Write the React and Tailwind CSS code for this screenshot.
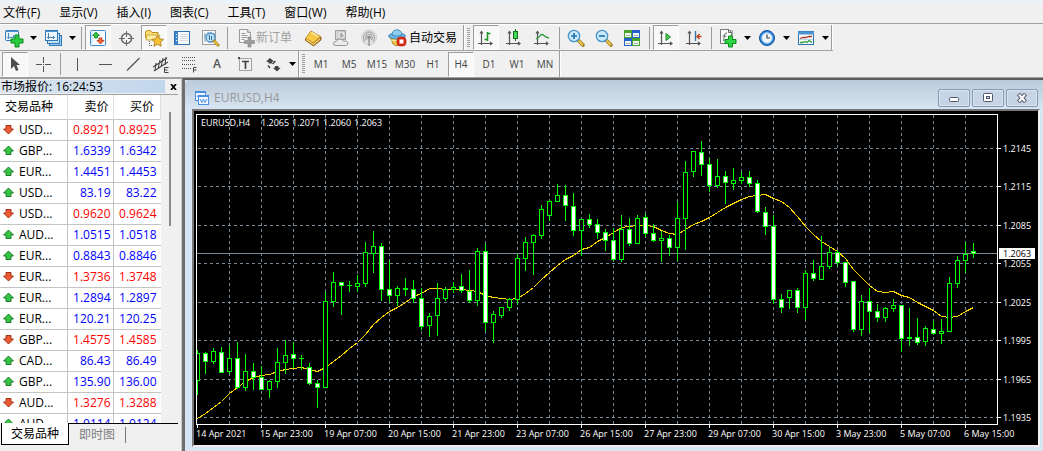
import clsx from "clsx";

// ---------- data ----------

const menus = ["文件(F)", "显示(V)", "插入(I)", "图表(C)", "工具(T)", "窗口(W)", "帮助(H)"];

const quotes = [
  ["USD...", "0.8921", "0.8925", "down"],
  ["GBP...", "1.6339", "1.6342", "up"],
  ["EUR...", "1.4451", "1.4453", "up"],
  ["USD...", "83.19", "83.22", "up"],
  ["USD...", "0.9620", "0.9624", "down"],
  ["AUD...", "1.0515", "1.0518", "up"],
  ["EUR...", "0.8843", "0.8846", "up"],
  ["EUR...", "1.3736", "1.3748", "down"],
  ["EUR...", "1.2894", "1.2897", "up"],
  ["EUR...", "120.21", "120.25", "up"],
  ["GBP...", "1.4575", "1.4585", "down"],
  ["CAD...", "86.43", "86.49", "up"],
  ["GBP...", "135.90", "136.00", "up"],
  ["AUD...", "1.3276", "1.3288", "down"],
  ["AUD...", "1.0114", "1.0124", "up"],
];

const timeframes = ["M1", "M5", "M15", "M30", "H1", "H4", "D1", "W1", "MN"];

// high, body top, body bottom, low, 1 = bearish
const candles = [
  [350, 353, 380, 394, 0], [352, 353, 361, 373, 1], [348, 351, 361, 363, 0], [347, 352, 372, 372, 1],
  [346, 358, 371, 373, 0], [342, 358, 387, 388, 1], [354, 371, 387, 390, 0], [363, 371, 377, 389, 1],
  [366, 377, 389, 389, 1], [380, 381, 389, 397, 0], [348, 362, 381, 387, 0], [340, 355, 362, 373, 0],
  [342, 354, 358, 367, 1], [355, 358, 358, 369, 0], [363, 367, 383, 384, 1], [380, 383, 387, 407, 1],
  [292, 301, 387, 387, 0], [272, 282, 301, 306, 0], [282, 282, 285, 314, 1], [281, 285, 285, 291, 0],
  [275, 283, 286, 291, 0], [242, 252, 283, 286, 0], [231, 246, 253, 272, 0], [243, 246, 289, 300, 1],
  [261, 289, 295, 301, 1], [286, 288, 295, 305, 0], [278, 288, 289, 295, 0], [280, 289, 298, 302, 1],
  [288, 298, 326, 329, 1], [313, 316, 325, 336, 0], [283, 298, 315, 335, 0], [287, 289, 298, 300, 0],
  [282, 287, 289, 292, 0], [274, 286, 290, 292, 1], [270, 291, 300, 302, 1], [248, 251, 300, 305, 0],
  [244, 251, 322, 330, 1], [311, 314, 322, 342, 0], [307, 307, 315, 317, 0], [298, 299, 307, 310, 0],
  [254, 258, 299, 304, 0], [237, 242, 258, 270, 0], [234, 235, 242, 274, 0], [205, 209, 235, 238, 0],
  [200, 201, 215, 220, 0], [184, 195, 201, 201, 0], [185, 195, 205, 220, 1], [193, 206, 230, 235, 1],
  [219, 219, 230, 255, 0], [214, 219, 224, 227, 1], [219, 224, 232, 238, 1], [229, 232, 240, 250, 1],
  [228, 240, 259, 260, 1], [215, 229, 259, 261, 0], [218, 229, 243, 245, 1], [215, 218, 243, 243, 0],
  [214, 217, 233, 236, 1], [224, 233, 240, 241, 1], [231, 238, 240, 261, 0], [235, 238, 247, 255, 1],
  [202, 218, 247, 260, 0], [161, 172, 218, 249, 0], [151, 151, 171, 176, 0], [141, 152, 164, 175, 1],
  [158, 164, 185, 191, 1], [159, 176, 185, 187, 0], [171, 176, 182, 203, 1], [168, 180, 183, 189, 0],
  [172, 177, 180, 183, 0], [171, 177, 183, 186, 1], [180, 183, 211, 212, 1], [207, 212, 226, 234, 1],
  [215, 226, 299, 303, 1], [294, 299, 307, 312, 1], [290, 290, 297, 308, 0], [288, 290, 307, 312, 1],
  [270, 273, 307, 319, 0], [260, 273, 278, 280, 1], [236, 266, 279, 279, 0], [247, 252, 266, 268, 0],
  [250, 252, 262, 265, 1], [262, 262, 282, 286, 1], [281, 281, 329, 331, 1], [295, 301, 329, 335, 0],
  [288, 301, 311, 332, 1], [304, 311, 317, 321, 1], [307, 308, 317, 321, 0], [299, 305, 308, 311, 0],
  [305, 305, 338, 351, 1], [308, 337, 338, 345, 0], [318, 337, 342, 344, 1], [326, 328, 341, 345, 0],
  [321, 329, 333, 334, 1], [319, 331, 333, 343, 0], [277, 283, 331, 331, 0], [256, 260, 283, 287, 0],
  [242, 254, 260, 272, 0], [243, 251, 253, 257, 1],
];

const average = [
  418, 413, 407, 401, 393, 387, 381, 377, 375, 374, 371, 369, 368, 367, 369, 371, 367, 361, 355, 348,
  342, 334, 324, 317, 311, 307, 302, 296, 293, 288, 288, 289, 289, 289, 290, 291, 295, 297, 298, 299,
  298, 293, 287, 279, 272, 265, 259, 255, 249, 247, 241, 237, 232, 227, 226, 225, 225, 226, 230, 233,
  234, 229, 224, 221, 217, 212, 207, 203, 199, 196, 195, 194, 198, 201, 207, 216, 226, 234, 241, 246,
  251, 258, 269, 277, 285, 291, 292, 291, 295, 297, 302, 306, 310, 316, 317, 316, 311, 307,
];

const prices = [
  ["1.2145", 148], ["1.2115", 186], ["1.2085", 225], ["1.2055", 263],
  ["1.2025", 302], ["1.1995", 340], ["1.1965", 379], ["1.1935", 417],
];

const times = [
  "14 Apr 2021", "15 Apr 23:00", "19 Apr 07:00", "20 Apr 15:00", "21 Apr 23:00", "23 Apr 07:00",
  "26 Apr 15:00", "27 Apr 23:00", "29 Apr 07:00", "30 Apr 15:00", "3 May 23:00", "5 May 07:00", "6 May 15:00",
];

const gridColumns = Array.from({ length: 24 }, (_, i) => 229 + i * 32);

// ---------- icons ----------

function Icon({ children }) {
  return (
    <svg width="20" height="20" viewBox="0 0 20 20" fill="none" aria-hidden="true" className="shrink-0">
      {children}
    </svg>
  );
}

const NewChartIcon = () => (
  <Icon>
    <rect x="1.5" y="2.5" width="13" height="10" rx="1" fill="#e6f3fd" stroke="#2f7bbd" />
    <path d="M1 3.500h14" stroke="#4a94d2" />
    <path d="M4.500 5v6M3 9.500h9M9.500 7v3" stroke="#4f8cc0" />
    <path d="M11 7h4v4h4v4h-4v4h-4v-4H7v-4h4z" fill="#27cc3d" stroke="#0b8a1c" />
  </Icon>
);

const ProfilesIcon = () => (
  <Icon>
    <rect x="6.500" y="7.500" width="12" height="10" fill="#9cc9ee" stroke="#2f78b8" />
    <rect x="4.500" y="5.500" width="12" height="10" fill="#c3e0f6" stroke="#2f78b8" />
    <rect x="2.500" y="2.500" width="12" height="10" fill="#eaf5fd" stroke="#2f78b8" />
    <path d="M2 3.500h13" stroke="#4a94d2" />
    <path d="M5.500 5v6M4 9.500h8M10.500 8v3" stroke="#4f7fa8" />
  </Icon>
);

const MarketIcon = () => (
  <Icon>
    <rect x="2.500" y="2.500" width="15" height="15" rx="1" fill="#f6fbff" stroke="#3c8ac8" />
    <path d="M4 4.500v11" stroke="#b9d9ef" />
    <path d="M8 4l3.500 3.500h-2v2.500h-3V7.500h-2z" fill="#33c443" stroke="#118a22" strokeWidth=".8" />
    <path d="M12.500 16l-3.500-3.500h2V10h3v2.500h2z" fill="#f26a3c" stroke="#b73410" strokeWidth=".8" />
  </Icon>
);

const TargetIcon = () => (
  <Icon>
    <circle cx="10.500" cy="10.500" r="5" stroke="#666" strokeWidth="1.500" />
    <path d="M10.500 3v6M10.500 12v6M3 10.500h6M12 10.500h6" stroke="#666" />
  </Icon>
);

const FavoritesIcon = () => (
  <Icon>
    <path d="M1.500 4.500q0-2 2-2h3l1.500 2h6v7h-11l-1.500-2z" fill="#f8dc6f" stroke="#b89124" />
    <path d="M3 7h13l-2 5H2z" fill="#fdf0a5" stroke="#c39e2e" strokeWidth=".8" />
    <path d="M5.500 13v5M5 17.500h4" stroke="#555" strokeDasharray="1 1" />
    <path d="M13.500 7.200l1.900 3.600 4 .6-2.900 2.800.7 4-3.700-1.900-3.600 1.900.7-4L7.800 11.400l4-.6z" fill="#f8c334" stroke="#a3701a" strokeWidth=".8" />
  </Icon>
);

const DataWindowIcon = () => (
  <Icon>
    <rect x="2.500" y="3.500" width="15" height="13" fill="#f7fbfe" stroke="#2c73b6" />
    <path d="M4.500 4v12" stroke="#3f87cc" strokeWidth="3" />
    <path d="M4 6.500h1M4 9.500h1M4 12.500h1" stroke="#fff" />
    <path d="M8 6.500h8M8 8.500h8M8 10.500h8M8 12.500h8" stroke="#d4dade" />
  </Icon>
);

const TesterIcon = () => (
  <Icon>
    <rect x="2.500" y="2.500" width="13" height="14" fill="#fafafa" stroke="#9c9c9c" />
    <path d="M5 5v9M8 4v7M11 4v3M14 5v5M4 8h3M8 6h3" stroke="#6e9ab8" />
    <circle cx="10.500" cy="9.500" r="4.500" fill="#b4def8" fillOpacity=".8" stroke="#4d92c6" strokeWidth="1.300" />
    <path d="M9.500 7v5M11.500 8v4" stroke="#3276a9" />
    <path d="M14 13l4 4" stroke="#b5831d" strokeWidth="3" strokeLinecap="round" />
    <path d="M14 13l4 4" stroke="#f2cc4a" strokeWidth="1.300" />
  </Icon>
);

const OrderIcon = () => (
  <Icon>
    <path d="M3.500 1.500h8l3 3v10h-11z" fill="#f5f5f5" stroke="#9b9b9b" />
    <path d="M11.500 1.500v3h3M5.500 5.500h4M5.500 7.500h6M5.500 9.500h6M5.500 11.500h3" stroke="#9b9b9b" />
    <path d="M12 9h3v3.500h3.500v3H15V19h-3v-3.500H8.500v-3H12z" fill="#9d9d9d" stroke="#858585" strokeWidth=".6" />
  </Icon>
);

const GoldIcon = () => (
  <Icon>
    <path d="M2.500 10.500v2l8 5.500 7.500-6v-3z" fill="#c4861a" stroke="#8d5b0d" strokeWidth=".8" />
    <path d="M8 3l9.500 5.500-7 6.500-8-4.500z" fill="#f8c944" stroke="#b0791a" strokeWidth=".8" />
    <path d="M3.500 11.800l7 4.500 6.500-5.500" stroke="#fff0b5" />
    <path d="M8.500 4.500l6.500 3.800" stroke="#fde99a" strokeWidth="1.500" />
  </Icon>
);

const ServerIcon = () => (
  <Icon>
    <path d="M4.500 2.500h10v9h-10z" fill="#d9d9d9" stroke="#9b9b9b" />
    <path d="M7 4h7v6H7z" fill="#f7f7f7" stroke="#aaa" strokeWidth=".6" />
    <path d="M8.500 6q2-2 3.500 0t0 3h-3z" fill="#aaa" />
    <path d="M5 17.500q-3 0-2.500-2.500.500-2 3-1.700.800-2.300 3.500-2.300 2.500 0 3.500 2 4-.500 4.500 2 0 2.500-2.500 2.500z" fill="#ececec" stroke="#969696" />
  </Icon>
);

const SignalIcon = () => (
  <Icon>
    <circle cx="10" cy="9.500" r="7.500" fill="#e2e2e2" stroke="#cfcfcf" />
    <path d="M6 14q-3-4 0-8 4-4 8 0 3 4 0 8" stroke="#b0b0b0" strokeWidth="1.300" />
    <path d="M7.500 12q-1.500-2.500 0-4.500 2.500-2 5 0 1.500 2 0 4.500" stroke="#a0a0a0" strokeWidth="1.200" />
    <circle cx="10" cy="9.500" r="1.800" fill="#8c8c8c" />
    <path d="M10 10v8" stroke="#999" strokeWidth="1.500" />
  </Icon>
);

const AutoTradeIcon = () => (
  <Icon>
    <path d="M3 9l3 7q3 3 7 1l4-8z" fill="#f2c34a" stroke="#a87718" strokeWidth=".8" />
    <path d="M4 12q3 2 6 0" stroke="#fff0b0" />
    <ellipse cx="10" cy="8" rx="8.500" ry="3" fill="#6db5e2" stroke="#2c7cae" strokeWidth=".8" />
    <path d="M5 7q0-5 5-5.300 4.500.300 5 5.300-5 2.500-10 0z" fill="#8fcdf0" stroke="#2c7cae" strokeWidth=".8" />
    <rect x="10" y="9" width="9" height="9" rx="3.500" fill="#dc2a17" stroke="#a8160a" strokeWidth=".6" />
    <rect x="12.500" y="11.500" width="4" height="4" fill="#fff" />
  </Icon>
);

const Axes = () => (
  <path d="M5.500 3v14M2 15.500h14M4 5.500l1.500-2 1.500 2M14 14l2 1.500-2 1.500" stroke="#555" strokeWidth="1.200" />
);

const BarsIcon = () => (
  <Icon>
    <Axes />
    <path d="M11.500 4v9M8.500 11.500h3M11.500 5.500h3" stroke="#1c9427" strokeWidth="1.600" />
  </Icon>
);

const CandleIcon = () => (
  <Icon>
    <Axes />
    <path d="M11.500 1v12" stroke="#11731b" />
    <rect x="9.500" y="3.500" width="4" height="7" fill="#43d957" stroke="#11731b" />
  </Icon>
);

const LineIcon = () => (
  <Icon>
    <Axes />
    <path d="M4 11q3-1 4-3.500 2-2 4 0t5 2.500" stroke="#2e9d3c" strokeWidth="1.300" />
  </Icon>
);

const ZoomIcon = ({ plus }) => (
  <Icon>
    <path d="M12.500 12.500l4.500 4.500" stroke="#9c7519" strokeWidth="3.600" strokeLinecap="round" />
    <path d="M12.500 12.500l4.500 4.500" stroke="#f0cd4f" strokeWidth="1.800" />
    <circle cx="8" cy="8" r="5.700" fill="#c8e8fb" stroke="#4594cc" strokeWidth="1.300" />
    <path d={plus ? "M5 8h6M8 5v6" : "M5 8h6"} stroke="#2775ad" strokeWidth="1.700" />
  </Icon>
);

const TileIcon = () => (
  <Icon>
    <path d="M2 2h8v8H2z" fill="#46a32b" />
    <path d="M10 2h8v8h-8z" fill="#245fcb" />
    <path d="M2 10h8v8H2z" fill="#245fcb" />
    <path d="M10 10h8v8h-8z" fill="#46a32b" />
    <path d="M3 5h6v4H3zM11 5h6v4h-6zM3 13h6v4H3zM11 13h6v4h-6z" fill="#f2f8ef" />
    <path d="M4 7.500h4M12 7.500h4M4 15.500h4M12 15.500h4" stroke="#9cb8a8" />
  </Icon>
);

const ScrollIcon = () => (
  <Icon>
    <Axes />
    <path d="M10 5.500v7l4.500-3.500z" fill="#4dcc55" stroke="#1b8a26" />
  </Icon>
);

const ShiftIcon = () => (
  <Icon>
    <Axes />
    <path d="M11.500 3v10" stroke="#3079a8" strokeWidth="1.400" />
    <path d="M12.500 8.500h5M15.500 6l-2.500 2.500 2.500 2.500" stroke="#c2421b" strokeWidth="1.400" />
  </Icon>
);

const IndicatorIcon = () => (
  <Icon>
    <path d="M4.500 2.500h10v13h-10z" fill="#ddd" stroke="#aaa" />
    <path d="M2.500 1.500h8l3 3v11h-11z" fill="#fcfcfc" stroke="#777" />
    <path d="M10.500 1.500v3h3M9 5q-2-.500-2.500 2l-1 6M4.500 8h4" stroke="#666" />
    <path d="M10.500 8h4v3.500H18v4h-3.500V19h-4v-3.500H7v-4h3.500z" fill="#2fd443" stroke="#0b8a1c" />
  </Icon>
);

const ClockIcon = () => (
  <Icon>
    <circle cx="10" cy="10" r="7.500" fill="#2b84dc" stroke="#114f9c" />
    <circle cx="10" cy="10" r="5.300" fill="#eef6fc" stroke="#9bc6ee" />
    <path d="M10 6.500V10h3" stroke="#444" strokeWidth="1.200" />
  </Icon>
);

const TemplateIcon = () => (
  <Icon>
    <rect x="2.500" y="3.500" width="15" height="13" fill="#f6fafd" stroke="#2c73b6" />
    <path d="M2 5h16" stroke="#4a94d2" strokeWidth="3" />
    <path d="M4 10.500l3-1h3l3-1h3" stroke="#a83425" strokeWidth="1.300" />
    <path d="M4 14.500h3l2-1 2 1 2-2 3 2" stroke="#2e9d3c" strokeWidth="1.300" />
    <path d="M3 11.500h14" stroke="#bcd4e6" />
  </Icon>
);

const PointerIcon = () => (
  <Icon>
    <path d="M6 3v12l3-3 2 5 2.500-1-2-5H15z" fill="#4d4d4d" />
  </Icon>
);

const CrosshairIcon = () => (
  <Icon>
    <path d="M10.500 3v6M10.500 12v6M3 10.500h6M12 10.500h6M10 10.500h1" stroke="#555" />
  </Icon>
);

const VLineIcon = () => (
  <Icon>
    <path d="M10.500 4v13" stroke="#555" />
  </Icon>
);

const HLineIcon = () => (
  <Icon>
    <path d="M4 10.500h13" stroke="#555" />
  </Icon>
);

const TrendIcon = () => (
  <Icon>
    <path d="M4 16.500L16.500 4" stroke="#555" strokeWidth="1.200" />
  </Icon>
);

const ChannelIcon = () => (
  <Icon>
    <path d="M2 13L16 4M3 17L17 8M5 9l-1 7M9 6l-2 9M12 4l-2 9M15 3l-1 8" stroke="#444" strokeWidth="1.100" />
    <path d="M17.500 13.500h-4v5h4M13.500 16h3" stroke="#444" />
  </Icon>
);

const FiboIcon = () => (
  <Icon>
    <path d="M3 3.500h14M3 6.500h14M3 10.500h14M3 14.500h9" stroke="#555" strokeDasharray="1 1" />
    <path d="M17.500 13.500h-3v5M14.500 16h3" stroke="#444" />
  </Icon>
);

const LabelIcon = () => (
  <Icon>
    <rect x="4.500" y="4.500" width="12" height="12" stroke="#555" strokeDasharray="1 1" />
    <path d="M3 3h2v2H3z" fill="#444" />
    <path d="M7 7.500h7M10.500 7v8" stroke="#444" strokeWidth="1.700" />
  </Icon>
);

const ArrowsIcon = () => (
  <Icon>
    <path d="M3 7.500L7 4l4 3.500L9 8v1.500H5.500V8z" fill="#444" />
    <path d="M17.500 14L14 17.500 10 14l2-.500v-1.500h3.500v1.500z" fill="#444" />
    <path d="M5 11.500l2 2.500M9.500 10l3-3" stroke="#444" strokeWidth="1.500" />
  </Icon>
);

const ChartWindowIcon = () => (
  <svg width="14" height="14" viewBox="0 0 14 14" fill="none" aria-hidden="true">
    <rect x=".5" y=".5" width="10" height="9" fill="#f0f7ff" stroke="#4b90e2" />
    <path d="M0 1h11" stroke="#4b90e2" strokeWidth="2" />
    <path d="M2 6l1.500-2L5 6l2-2" stroke="#4b90e2" />
    <rect x="3.500" y="4.500" width="10" height="9" fill="#f0f7ff" stroke="#4b90e2" />
    <path d="M3 5h11" stroke="#4b90e2" strokeWidth="2" />
    <path d="M5 8l2 3.500L8.500 8l1.500 3.500L12 8" stroke="#4b90e2" />
  </svg>
);

function QuoteArrow({ direction }) {
  const up = direction === "up";
  return (
    <svg width="11" height="11" viewBox="0 0 11 11" aria-hidden="true">
      <path
        d={up ? "M5.500 1l5 5H8v3.500H3V6H.500z" : "M5.500 10l5-5H8V1.500H3V5H.500z"}
        fill={up ? "#35c445" : "#ee5a32"}
        stroke={up ? "#12701e" : "#98280c"}
        strokeWidth=".9"
      />
    </svg>
  );
}

// ---------- toolbar parts ----------

function Tool({ label, pressed, children }) {
  return (
    <button
      type="button"
      aria-label={label}
      aria-pressed={pressed}
      className={clsx(
        "mx-px flex h-[25px] w-[26px] shrink-0 items-center justify-center border",
        pressed ? "border-t-[#9d9d9d] border-l-[#9d9d9d] border-r-white border-b-white bg-[#f8f8f8]" : "border-transparent"
      )}
    >
      {children}
    </button>
  );
}

function DropArrow({ label }) {
  return (
    <button type="button" aria-label={label} className="flex h-[25px] w-[11px] shrink-0 items-center justify-center">
      <svg width="7" height="4" viewBox="0 0 7 4" aria-hidden="true">
        <path d="M0 0h7L3.500 4z" fill="#000" />
      </svg>
    </button>
  );
}

const Separator = () => <div className="mr-[2px] ml-[3px] h-[22px] w-px shrink-0 bg-[#9d9d9d]" />;
const BarEnd = () => <div className="h-full w-[2px] shrink-0 border-r border-l border-r-white border-l-[#9d9d9d]" />;
const Grip = () => (
  <div className="mx-[2px] h-5 w-[3px] shrink-0 bg-[repeating-linear-gradient(#a0a0a0_0_1px,#efefef_1px_2px)]" />
);

// ---------- chart ----------

function PriceChart() {
  return (
    <svg
      width="100%"
      height="334"
      className="block bg-black font-['Open_Sans','Noto_Sans',sans-serif] text-[9px]"
      role="img"
      aria-label="EURUSD,H4"
    >
      <defs>
        <clipPath id="plot">
          <rect x="197" y="115" width="800" height="309" />
        </clipPath>
      </defs>
      <g transform="translate(-194 -111)" shapeRendering="crispEdges">
        <g clipPath="url(#plot)" fill="none">
          <g stroke="#778899" strokeDasharray="3 3">
            {gridColumns.map((x) => (
              <path key={x} d={`M${x}.5 115V424`} />
            ))}
            {prices.map(([label, y]) => (
              <path key={label} d={`M198 ${y}.5H997`} />
            ))}
          </g>
          <path d="M197 253.5H997" stroke="#778899" />
          <polyline points={average.map((y, i) => `${197.5 + i * 8},${y + 0.5}`).join(" ")} stroke="#ffd700" />
          {candles.map(([high, top, bottom, low, bear], i) => {
            const x = 197 + i * 8;
            return (
              <g key={x} stroke="#00ff00">
                <path d={`M${x}.5 ${high}V${low + 1}`} />
                {top === bottom ? (
                  <path d={`M${x - 2} ${top}.5h5`} />
                ) : (
                  <rect x={x - 1.5} y={top + 0.5} width="4" height={bottom - top} fill={bear ? "#fff" : "#000"} />
                )}
              </g>
            );
          })}
        </g>
        <path d="M196.5 424.5V114.5H997.5V424.5z" fill="none" stroke="#fff" />
        <g stroke="#fff">
          {times.map((label, i) => (
            <path key={label} d={`M${197 + i * 64}.5 425v3`} />
          ))}
          {prices.map(([label, y]) => (
            <path key={label} d={`M998 ${y}.5h3`} />
          ))}
        </g>
        <g fill="#fff">
          {times.map((label, i) => (
            <text key={label} x={196 + i * 64} y="437">
              {label}
            </text>
          ))}
          {prices.map(([label, y]) => (
            <text key={label} x="1003" y={y + 4}>
              {label}
            </text>
          ))}
          <text x="201" y="126">EURUSD,H4</text>
          <text x="261" y="126">1.2065</text>
          <text x="292" y="126">1.2071</text>
          <text x="323" y="126">1.2060</text>
          <text x="354" y="126">1.2063</text>
        </g>
        <rect x="999" y="248" width="36" height="11" fill="#fff" />
        <text x="1003" y="257" fill="#000">1.2063</text>
      </g>
    </svg>
  );
}

function WindowButton({ label, children }) {
  return (
    <button
      type="button"
      aria-label={label}
      className="flex h-[18px] w-8 items-center justify-center rounded-[2px] border border-[#8798b4] bg-[#c6d4e5] shadow-[inset_0_0_0_1px_#dce6f1]"
    >
      <svg width="12" height="10" viewBox="0 0 12 10" fill="none" aria-hidden="true">
        {children}
      </svg>
    </button>
  );
}

// ---------- panels ----------

function MarketWatch() {
  return (
    <section className="flex w-[182px] shrink-0 flex-col border-t border-r border-t-[#a0a0a0] border-r-[#c9c9c9] bg-[#f0f0f0] pr-[3px]">
      <header className="flex h-4 shrink-0 items-center border-b border-[#a0a0a0]">
        <h2 className="h-[13px] flex-1 bg-linear-to-r from-[#dde6f0] to-[#c1d6ec] pl-px leading-[13px]">市场报价: 16:24:53</h2>
        <button type="button" aria-label="关闭" className="flex w-[13px] justify-end pr-px">
          <svg width="7" height="6" viewBox="0 0 7 6" aria-hidden="true">
            <path d="M1 0l5 6M6 0L1 6" stroke="#000" strokeWidth="1.700" />
          </svg>
        </button>
      </header>
      <div className="flex min-h-0 flex-1 overflow-hidden">
        <table className="h-max w-[161px] table-fixed border-collapse bg-white">
          <thead>
            <tr className="h-6 border-b border-[#c4c4c4]">
              <th className="w-[67px] border-r border-[#dedede] p-0 pl-[5px] text-left font-normal">交易品种</th>
              <th className="w-[46px] border-r border-[#dedede] p-0 pr-1 text-right font-normal">卖价</th>
              <th className="border-r border-[#dedede] p-0 pr-1.5 text-right font-normal">买价</th>
            </tr>
          </thead>
          <tbody>
            {quotes.map(([symbol, bid, ask, direction]) => (
              <tr
                key={symbol + bid}
                className={clsx("h-[21px] border-b border-[#c4c4c4]", direction === "up" ? "text-[#0000ff]" : "text-[#ff0000]")}
              >
                <td className="border-r border-[#c4c4c4] p-0 pl-[3px] text-black">
                  <div className="flex items-center gap-[5px]">
                    <QuoteArrow direction={direction} />
                    {symbol}
                  </div>
                </td>
                <td className="border-r border-[#c4c4c4] p-0 pr-[2px] text-right">{bid}</td>
                <td className="p-0 pr-1 text-right">{ask}</td>
              </tr>
            ))}
          </tbody>
        </table>
        <div className="flex flex-1 justify-center pt-[17px]">
          <div className="h-[114px] w-[2px] bg-[#8a8a8a]" />
        </div>
      </div>
      <div role="tablist" className="flex h-7 shrink-0 items-start">
        <button
          type="button"
          role="tab"
          aria-selected="true"
          className="ml-px h-[22px] w-[68px] border-r border-b border-l border-black bg-white"
        >
          交易品种
        </button>
        <div className="flex h-[22px] flex-1 items-center border-t border-black">
          <button type="button" role="tab" aria-selected="false" className="h-4 w-[57px] border-r border-[#777] leading-4 text-[#808080]">
            即时图
          </button>
        </div>
      </div>
    </section>
  );
}

function ChartWindow() {
  return (
    <main className="flex min-w-0 flex-1 flex-col border-t-2 border-l-[3px] border-t-[#5c5c5c] border-l-[#6e6e6e] bg-[#d7e4f2]">
      <header className="flex h-[29px] shrink-0 items-center rounded-tl-[5px] bg-linear-to-b from-[#bccad9] to-[#d7e4f2] pt-1.5 pr-[5px] pl-[10px]">
        <ChartWindowIcon />
        <h1 className="ml-[5px] flex-1 text-[12px] leading-4 text-[#999]">EURUSD,H4</h1>
        <div className="flex gap-[2px]">
          <WindowButton label="最小化">
            <rect x="1.500" y="4.500" width="9" height="4" rx="1" fill="#fff" stroke="#535666" />
          </WindowButton>
          <WindowButton label="最大化">
            <rect x="1.500" y=".5" width="9" height="8" rx="1" fill="#fff" stroke="#535666" />
            <rect x="4.500" y="3.500" width="3" height="2" fill="#c6d4e5" stroke="#535666" />
          </WindowButton>
          <WindowButton label="关闭图表">
            <path d="M2.500 1l7 8M9.500 1l-7 8" stroke="#535666" strokeWidth="4" />
            <path d="M3 1.500l6 7M9 1.500l-6 7" stroke="#fff" strokeWidth="2" />
          </WindowButton>
        </div>
      </header>
      <div className="mr-[3px] ml-[7px] border-2 border-t-[#777] border-r-[#f4f4f4] border-b-[#f4e9ee] border-l-[#777]">
        <PriceChart />
      </div>
    </main>
  );
}

export default function App() {
  return (
    <div className="flex h-screen flex-col overflow-hidden border-t-[3px] border-[#e8f4f9] bg-[#f0f0f0] font-['Open_Sans','Noto_Sans_CJK_SC',sans-serif] text-[12px] leading-4 text-black">
      <nav className="flex h-5 shrink-0 items-center gap-[19px] pl-[3px]">
        {menus.map((menu) => (
          <button key={menu} type="button" className="whitespace-nowrap">
            {menu}
          </button>
        ))}
      </nav>

      <div className="h-7 shrink-0 border-t border-[#a0a0a0]">
        <div className="flex h-[27px] w-max items-center border-t border-b border-t-white border-b-[#a0a0a0]">
          <Tool label="新图表"><NewChartIcon /></Tool>
          <DropArrow label="新图表选项" />
          <Tool label="图表组合"><ProfilesIcon /></Tool>
          <DropArrow label="图表组合选项" />
          <Separator />
          <Tool label="市场报价" pressed><MarketIcon /></Tool>
          <Tool label="数据窗口"><TargetIcon /></Tool>
          <Tool label="导航" pressed><FavoritesIcon /></Tool>
          <Tool label="终端"><DataWindowIcon /></Tool>
          <Tool label="策略测试"><TesterIcon /></Tool>
          <Separator />
          <button type="button" className="flex w-[69px] shrink-0 items-center pl-[6px] whitespace-nowrap text-[#a0a0a0]">
            <OrderIcon />
            新订单
          </button>
          <Tool label="编辑器"><GoldIcon /></Tool>
          <Tool label="服务器"><ServerIcon /></Tool>
          <Tool label="信号"><SignalIcon /></Tool>
          <button type="button" className="flex w-20 shrink-0 items-center gap-[2px] pl-1 whitespace-nowrap">
            <AutoTradeIcon />
            自动交易
          </button>
          <BarEnd />
          <Grip />
          <Tool label="柱状图" pressed><BarsIcon /></Tool>
          <Tool label="蜡烛图"><CandleIcon /></Tool>
          <Tool label="折线图"><LineIcon /></Tool>
          <Separator />
          <Tool label="放大"><ZoomIcon plus /></Tool>
          <Tool label="缩小"><ZoomIcon /></Tool>
          <Tool label="平铺窗口"><TileIcon /></Tool>
          <Separator />
          <Tool label="自动滚动" pressed><ScrollIcon /></Tool>
          <Tool label="图表平移"><ShiftIcon /></Tool>
          <Separator />
          <Tool label="指标"><IndicatorIcon /></Tool>
          <DropArrow label="指标选项" />
          <Tool label="周期"><ClockIcon /></Tool>
          <DropArrow label="周期选项" />
          <Tool label="模板"><TemplateIcon /></Tool>
          <DropArrow label="模板选项" />
          <BarEnd />
        </div>
      </div>

      <div className="flex h-[27px] shrink-0 items-center border-b border-[#a0a0a0] pl-px">
        <Tool label="光标" pressed><PointerIcon /></Tool>
        <Tool label="十字准线"><CrosshairIcon /></Tool>
        <Separator />
        <Tool label="垂直线"><VLineIcon /></Tool>
        <Tool label="水平线"><HLineIcon /></Tool>
        <Tool label="趋势线"><TrendIcon /></Tool>
        <Tool label="通道"><ChannelIcon /></Tool>
        <Tool label="斐波那契"><FiboIcon /></Tool>
        <Tool label="文字">
          <span className="text-[12px] font-semibold text-[#555]">A</span>
        </Tool>
        <Tool label="文本标签"><LabelIcon /></Tool>
        <Tool label="箭头"><ArrowsIcon /></Tool>
        <DropArrow label="箭头选项" />
        <BarEnd />
        <Grip />
        {timeframes.map((frame) => (
          <Tool key={frame} label={frame} pressed={frame === "H4"}>
            <span className="text-[10px] text-[#444]">{frame}</span>
          </Tool>
        ))}
        <BarEnd />
      </div>

      <div className="flex min-h-0 flex-1">
        <MarketWatch />
        <ChartWindow />
      </div>
    </div>
  );
}
